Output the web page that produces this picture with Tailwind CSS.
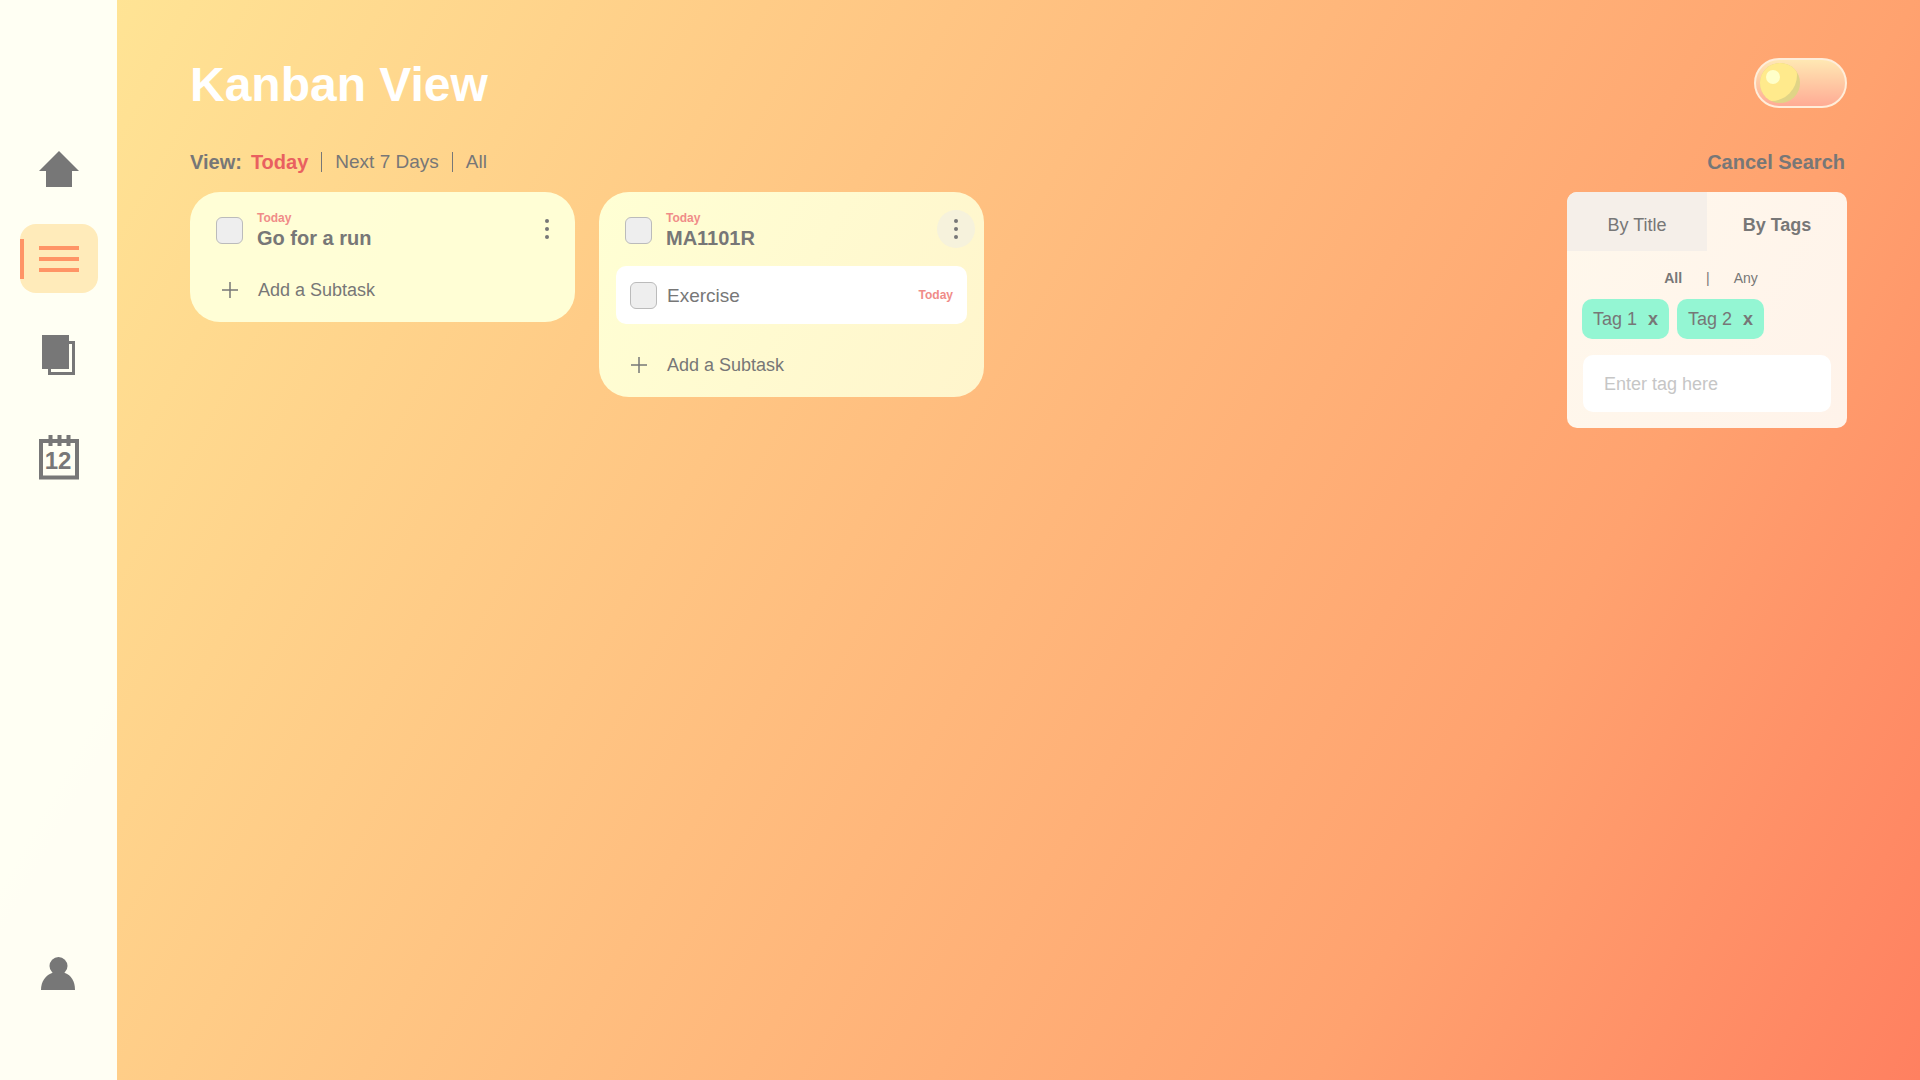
<!DOCTYPE html>
<html lang="en">
<head>
<meta charset="utf-8">
<title>Kanban View</title>
<script src="https://cdn.jsdelivr.net/npm/@tailwindcss/browser@4"></script>
</head>
<body class="flex min-h-screen bg-[linear-gradient(119deg,#ffe897_0%,#ffa26f_76%,#ff8060_100%)] font-['Liberation_Sans',Arial,sans-serif] text-[#777777]">
  <nav aria-label="Main" class="flex w-[117px] shrink-0 flex-col items-center bg-[#fffff5]/98 pt-[151px] pb-[90px]">
    <a href="#home" aria-label="Home" class="mb-[37px] block">
      <svg width="40" height="36" viewBox="0 0 40 36" fill="#777777"><path d="M20 0 40 20H33V36H7V20H0Z"/></svg>
    </a>
    <a href="#tasks" aria-label="Kanban" aria-current="page" class="mb-[42px] flex h-[69px] w-[78px] items-center justify-between rounded-2xl bg-[#ffebba]">
      <span class="h-10 w-1 bg-[#ff9466]"></span>
      <svg class="mr-[19px]" width="40" height="26" viewBox="0 0 40 26" fill="#ff9466"><path d="M0 0H40V4H0ZM0 11H40V15H0ZM0 22H40V26H0Z"/></svg>
    </a>
    <a href="#notes" aria-label="Notes" class="mb-[60px] block">
      <svg width="33" height="40" viewBox="0 0 33 40"><path d="M7.5 7.500H31.500V38.500H7.500Z" fill="none" stroke="#777777" stroke-width="3"/><path d="M0 0H27V34H0Z" fill="#777777"/></svg>
    </a>
    <a href="#calendar" aria-label="Calendar" class="block">
      <svg width="40" height="45" viewBox="0 0 40 45"><path d="M2 6H38V42.500H2Z" fill="none" stroke="#777777" stroke-width="4"/><path d="M9.500 0h4v11h-4zM18.500 0h4v11h-4zM27.500 0h4v11h-4z" fill="#777777"/><text x="19" y="34" text-anchor="middle" font-size="24" font-weight="700" fill="#777777">12</text></svg>
    </a>
    <a href="#profile" aria-label="Profile" class="mt-auto block">
      <svg width="36" height="33" viewBox="0 0 36 33" fill="#777777"><circle cx="17.500" cy="9" r="9"/><path d="M0 33C0 24 5 18 11 16H24C30 18 34 24 34 33Z"/></svg>
    </a>
  </nav>

  <main class="min-w-0 flex-1 pt-[57px] pr-[73px] pl-[73px]">
    <header class="flex items-start justify-between">
      <h1 class="text-5xl/14 font-bold text-white">Kanban View</h1>
      <button type="button" role="switch" aria-checked="false" aria-label="Dark mode" class="mt-px h-[50px] w-[93px]">
        <svg width="93" height="50" viewBox="0 0 93 50">
          <defs>
            <linearGradient id="track" x2="0" y2="1"><stop stop-color="#ffe9b4"/><stop offset="1" stop-color="#ffaa94"/></linearGradient>
            <clipPath id="sun"><circle cx="26" cy="25" r="20"/></clipPath>
          </defs>
          <rect x="1" y="1" width="91" height="48" rx="24" fill="url(#track)" stroke="#ffedd9" stroke-width="2"/>
          <circle cx="26" cy="25" r="20" fill="#e0d486"/>
          <circle cx="17" cy="17" r="26" fill="#ffea8c" clip-path="url(#sun)"/>
          <circle cx="19" cy="19" r="7" fill="#ffffc9"/>
        </svg>
      </button>
    </header>

    <div class="mt-[37px] flex h-6 items-center justify-between text-xl/6">
      <div class="flex items-center">
        <span class="mr-[9px] font-bold">View:</span>
        <button type="button" class="font-bold text-[#e96060]">Today</button>
        <span class="mx-[13px] h-5 w-px bg-[#777777]"></span>
        <button type="button" class="text-[19px]">Next 7 Days</button>
        <span class="mx-[13px] h-5 w-px bg-[#777777]"></span>
        <button type="button" class="text-[19px]">All</button>
      </div>
      <button type="button" class="mr-0.5 font-bold">Cancel Search</button>
    </div>

    <div class="mt-[18px] flex items-start justify-between">
      <div class="flex items-start gap-6">
        <article class="flex h-[130px] w-[385px] flex-col rounded-[30px] bg-[#ffffd7]/98">
          <div class="flex items-start pt-[18px] pr-[9px] pl-[26px]">
            <input id="t1" type="checkbox" class="mt-[7px] size-[27px] appearance-none rounded-md border border-[#bbbbbb] bg-[#eeeeee]">
            <label for="t1" class="ml-[14px] flex flex-1 flex-col font-bold"><span class="text-xs/4 text-[#f08c88]">Today</span><span class="text-xl/6">Go for a run</span></label>
            <button type="button" aria-label="Task menu" class="flex size-[38px] items-center justify-center rounded-full">
              <svg width="4" height="20" viewBox="0 0 4 20" fill="#777777"><circle cx="2" cy="2" r="2"/><circle cx="2" cy="10" r="2"/><circle cx="2" cy="18" r="2"/></svg>
            </button>
          </div>
          <button type="button" class="mt-auto mb-5 ml-8 flex h-6 items-center gap-5 text-lg/6">
            <svg width="16" height="16" viewBox="0 0 16 16" stroke="#777777" stroke-width="1.500"><path d="M8 0V16M0 8H16"/></svg>Add a Subtask
          </button>
        </article>

        <article class="flex h-[205px] w-[385px] flex-col rounded-[30px] bg-[linear-gradient(119deg,#ffffd4,#fff5cc)]">
          <div class="flex items-start pt-[18px] pr-[9px] pl-[26px]">
            <input id="t2" type="checkbox" class="mt-[7px] size-[27px] appearance-none rounded-md border border-[#bbbbbb] bg-[#eeeeee]">
            <label for="t2" class="ml-[14px] flex flex-1 flex-col font-bold"><span class="text-xs/4 text-[#f08c88]">Today</span><span class="text-xl/6">MA1101R</span></label>
            <button type="button" aria-label="Task menu" class="flex size-[38px] items-center justify-center rounded-full bg-[#f6f2dc]">
              <svg width="4" height="20" viewBox="0 0 4 20" fill="#777777"><circle cx="2" cy="2" r="2"/><circle cx="2" cy="10" r="2"/><circle cx="2" cy="18" r="2"/></svg>
            </button>
          </div>
          <div class="mt-4 mr-[17px] ml-[17px] flex h-[58px] items-center rounded-[10px] bg-white pr-[14px] pl-[14px]">
            <input id="t3" type="checkbox" class="size-[27px] appearance-none rounded-md border border-[#bbbbbb] bg-[#eeeeee]">
            <label for="t3" class="ml-[10px] flex-1 pt-0.5 text-[19px]/6">Exercise</label>
            <span class="text-xs/4 font-bold text-[#f08c88]">Today</span>
          </div>
          <button type="button" class="mt-auto mb-5 ml-8 flex h-6 items-center gap-5 text-lg/6">
            <svg width="16" height="16" viewBox="0 0 16 16" stroke="#777777" stroke-width="1.500"><path d="M8 0V16M0 8H16"/></svg>Add a Subtask
          </button>
        </article>
      </div>

      <section aria-label="Search" class="w-[280px] overflow-hidden rounded-[10px] bg-[linear-gradient(119deg,#fff8ec,#fff3ea)] pb-4">
        <div class="grid h-[59px] grid-cols-2 text-lg/6">
          <button type="button" class="bg-[#f5efe9] pt-1.5">By Title</button>
          <button type="button" class="pt-1.5 font-bold">By Tags</button>
        </div>
        <div class="mt-[19px] flex h-4 items-center justify-center gap-6 pl-2 text-sm/4">
          <button type="button" class="font-bold">All</button>
          <span>|</span>
          <button type="button">Any</button>
        </div>
        <div class="mt-[13px] flex gap-2 pl-[15px] text-lg/6">
          <span class="flex h-10 w-[87px] items-center justify-between rounded-[10px] bg-[#94f6d3] px-[11px]">Tag 1<button type="button" aria-label="Remove Tag 1" class="font-bold">x</button></span>
          <span class="flex h-10 w-[87px] items-center justify-between rounded-[10px] bg-[#94f6d3] px-[11px]">Tag 2<button type="button" aria-label="Remove Tag 2" class="font-bold">x</button></span>
        </div>
        <div class="mt-4 px-4"><input type="text" aria-label="Tag" placeholder="Enter tag here" class="block h-[57px] w-full rounded-[10px] bg-white px-[21px] pt-0.5 text-lg placeholder:text-[#c6c6c6]"></div>
      </section>
    </div>
  </main>
</body>
</html>
